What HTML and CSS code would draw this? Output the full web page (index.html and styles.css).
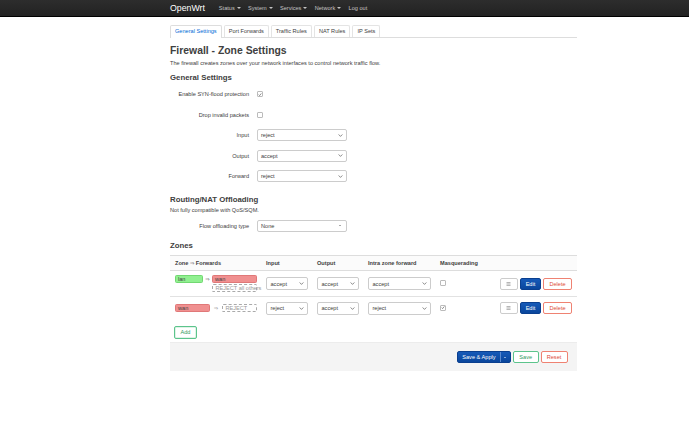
FILE: index.html
```html
<!DOCTYPE html>
<html>
<head>
<meta charset="utf-8">
<title>Firewall - Zone Settings</title>
<link rel="stylesheet" href="styles.css">
</head>
<body>
<header class="topbar">
  <div class="topbar-inner">
    <span class="brand">OpenWrt</span>
    <ul class="nav">
      <li>Status <span class="caret"></span></li>
      <li>System <span class="caret"></span></li>
      <li>Services <span class="caret"></span></li>
      <li>Network <span class="caret"></span></li>
      <li>Log out</li>
    </ul>
  </div>
</header>
<main class="container">
  <ul class="tabs">
    <li class="active">General Settings</li>
    <li>Port Forwards</li>
    <li>Traffic Rules</li>
    <li>NAT Rules</li>
    <li>IP Sets</li>
  </ul>

  <h2 class="title">Firewall - Zone Settings</h2>
  <p class="desc">The firewall creates zones over your network interfaces to control network traffic flow.</p>

  <h3 class="section">General Settings</h3>
  <div class="form">
    <div class="row"><label>Enable SYN-flood protection</label><span class="cb"><svg viewBox="0 0 6 6" width="5" height="5"><path d="M1 3.2 L2.4 4.6 L5 1.4" fill="none" stroke="#444" stroke-width="0.9"/></svg></span></div>
    <div class="row"><label>Drop invalid packets</label><span class="cb"></span></div>
    <div class="row"><label>Input</label><div class="select w90"><span>reject</span><svg class="chev" viewBox="0 0 6 4" width="5" height="3"><path d="M0.5 0.6 L3 3.2 L5.5 0.6" fill="none" stroke="#555" stroke-width="0.9"/></svg></div></div>
    <div class="row"><label>Output</label><div class="select w90"><span>accept</span><svg class="chev" viewBox="0 0 6 4" width="5" height="3"><path d="M0.5 0.6 L3 3.2 L5.5 0.6" fill="none" stroke="#555" stroke-width="0.9"/></svg></div></div>
    <div class="row"><label>Forward</label><div class="select w90"><span>reject</span><svg class="chev" viewBox="0 0 6 4" width="5" height="3"><path d="M0.5 0.6 L3 3.2 L5.5 0.6" fill="none" stroke="#555" stroke-width="0.9"/></svg></div></div>
  </div>

  <h3 class="section s2">Routing/NAT Offloading</h3>
  <p class="note">Not fully compatible with QoS/SQM.</p>
  <div class="form f2">
    <div class="row"><label>Flow offloading type</label><div class="select w90"><span>None</span><span class="tri"></span></div></div>
  </div>

  <h3 class="section s3">Zones</h3>
  <div class="zones">
    <div class="zrow zhead">
      <div>Zone <span class="arrow">⇒</span> Forwards</div>
      <div>Input</div>
      <div>Output</div>
      <div>Intra zone forward</div>
      <div>Masquerading</div>
      <div></div>
    </div>
    <div class="zrow r1">
      <div class="zone">
        <span class="badge lan">lan</span>
        <span class="arrow">⇒</span>
        <span class="stack"><span class="badge wan w45">wan</span><span class="badge reject w45">REJECT all others</span></span>
      </div>
      <div><div class="select w42"><span>accept</span><svg class="chev" viewBox="0 0 6 4" width="5" height="3"><path d="M0.5 0.6 L3 3.2 L5.5 0.6" fill="none" stroke="#555" stroke-width="0.9"/></svg></div></div>
      <div><div class="select w42"><span>accept</span><svg class="chev" viewBox="0 0 6 4" width="5" height="3"><path d="M0.5 0.6 L3 3.2 L5.5 0.6" fill="none" stroke="#555" stroke-width="0.9"/></svg></div></div>
      <div><div class="select w63"><span>accept</span><svg class="chev" viewBox="0 0 6 4" width="5" height="3"><path d="M0.5 0.6 L3 3.2 L5.5 0.6" fill="none" stroke="#555" stroke-width="0.9"/></svg></div></div>
      <div><span class="cb"></span></div>
      <div class="actions">
        <span class="btn btn-menu"><svg viewBox="0 0 6 5" width="5" height="4"><path d="M0.5 0.7 H5.5 M0.5 2.5 H5.5 M0.5 4.3 H5.5" stroke="#777" stroke-width="0.7"/></svg></span>
        <span class="btn btn-edit">Edit</span>
        <span class="btn btn-del">Delete</span>
      </div>
    </div>
    <div class="zrow r2">
      <div class="zone">
        <span class="badge wan w35">wan</span>
        <span class="arrow dim">⇒</span>
        <span class="badge reject w35">REJECT</span>
      </div>
      <div><div class="select w42"><span>reject</span><svg class="chev" viewBox="0 0 6 4" width="5" height="3"><path d="M0.5 0.6 L3 3.2 L5.5 0.6" fill="none" stroke="#555" stroke-width="0.9"/></svg></div></div>
      <div><div class="select w42"><span>accept</span><svg class="chev" viewBox="0 0 6 4" width="5" height="3"><path d="M0.5 0.6 L3 3.2 L5.5 0.6" fill="none" stroke="#555" stroke-width="0.9"/></svg></div></div>
      <div><div class="select w63"><span>reject</span><svg class="chev" viewBox="0 0 6 4" width="5" height="3"><path d="M0.5 0.6 L3 3.2 L5.5 0.6" fill="none" stroke="#555" stroke-width="0.9"/></svg></div></div>
      <div><span class="cb"><svg viewBox="0 0 6 6" width="5" height="5"><path d="M1 3.2 L2.4 4.6 L5 1.4" fill="none" stroke="#444" stroke-width="0.9"/></svg></span></div>
      <div class="actions">
        <span class="btn btn-menu"><svg viewBox="0 0 6 5" width="5" height="4"><path d="M0.5 0.7 H5.5 M0.5 2.5 H5.5 M0.5 4.3 H5.5" stroke="#777" stroke-width="0.7"/></svg></span>
        <span class="btn btn-edit">Edit</span>
        <span class="btn btn-del">Delete</span>
      </div>
    </div>
  </div>

  <div class="addwrap"><span class="btn btn-add">Add</span></div>

  <div class="footer">
    <span class="btn btn-apply"><span class="apply-main">Save &amp; Apply</span><span class="apply-caret"><span class="mini-tri"></span></span></span>
    <span class="btn btn-save">Save</span>
    <span class="btn btn-reset">Reset</span>
  </div>
</main>
</body>
</html>
```

FILE: styles.css
```css
* {
  box-sizing: border-box;
  margin: 0;
  padding: 0;
}

body {
  margin: 0;
  font-family: "Liberation Sans", Arial, sans-serif;
  font-size: 5.6px;
  color: #404040;
  background: #fff;
}

/* top bar */
.topbar {
  height: 17px;
  background: linear-gradient(#2d2d2d, #222);
  border-bottom: 1px solid #000;
}

.topbar-inner {
  margin-left: 170px;
  height: 16px;
  display: flex;
  align-items: center;
}

.brand {
  color: #fff;
  font-size: 8.75px;
  line-height: 16px;
}

.nav {
  display: flex;
  list-style: none;
  gap: 7.3px;
  margin-left: 14px;
  color: #c4c4c4;
}

.nav li {
  display: flex;
  align-items: center;
  gap: 2px;
}

.caret {
  width: 0;
  height: 0;
  border-left: 2px solid transparent;
  border-right: 2px solid transparent;
  border-top: 2px solid #c4c4c4;
}

/* main */
.container {
  margin-left: 170px;
  width: 407px;
  padding-top: 8px;
}

.tabs {
  display: flex;
  list-style: none;
  gap: 2px;
  height: 13px;
  border-bottom: 1px solid #ddd;
}

.tabs li {
  height: 12px;
  line-height: 11px;
  padding: 0 4px;
  border: 1px solid #e4e4e4;
  border-bottom: 0;
  border-radius: 2px 2px 0 0;
  color: #404040;
}

.tabs li.active {
  height: 13px;
  color: #0069d6;
  border-color: #ddd;
  background: #fff;
}

.title {
  margin-top: 7px;
  font-size: 10.4px;
  line-height: 12px;
  font-weight: bold;
  color: #404040;
}

.desc {
  margin-top: 2.5px;
  line-height: 7px;
}

.section {
  margin-top: 6.5px;
  font-size: 7.8px;
  line-height: 10px;
  font-weight: bold;
  color: #404040;
}

.section.s2 {
  margin-top: 12.5px;
}

.section.s3 {
  margin-top: 9.5px;
}

.note {
  margin-top: 2px;
  line-height: 7px;
}

.form {
  display: flex;
  flex-direction: column;
  gap: 8.5px;
  margin-top: 5px;
}

.form.f2 {
  margin-top: 6px;
}

.row {
  display: flex;
  align-items: center;
  height: 12px;
  gap: 7.5px;
}

.row label {
  width: 79px;
  text-align: right;
}

.row .cb {
  margin-left: 0.5px;
}

/* controls */
.select {
  height: 12px;
  border: 1px solid #ccc;
  border-radius: 2px;
  background: #fff;
  display: flex;
  align-items: center;
  justify-content: space-between;
  padding: 0 3px 0 3.5px;
  color: #404040;
}

.select.w90 { width: 90px; }
.select.w42 { width: 42px; height: 13px; }
.select.w63 { width: 63px; height: 13px; }

.chev {
  display: block;
}

.tri {
  width: 0;
  height: 0;
  border-left: 1.3px solid transparent;
  border-right: 1.3px solid transparent;
  border-top: 1.6px solid #555;
  margin-right: 2px;
}

.cb {
  width: 6px;
  height: 6px;
  border: 1px solid #bbb;
  border-radius: 1px;
  background: #fff;
  display: inline-flex;
  align-items: center;
  justify-content: center;
}

.cb svg {
  display: block;
}

/* zones table */
.zones {
  margin-top: 4px;
}

.zrow {
  display: grid;
  grid-template-columns: 91px 51px 51px 72px 1fr auto;
  align-items: center;
  padding: 0 5px;
}

.zhead {
  height: 16px;
  border-top: 1px solid #ddd;
  border-bottom: 1px solid #ddd;
  background: #fbfbfb;
  font-weight: bold;
  color: #404040;
}

.zhead .arrow {
  font-weight: normal;
}

.r1 {
  height: 26px;
  border-bottom: 1px solid #e2e2e2;
}

.r2 {
  height: 22px;
}

.zone {
  width: 82px;
  display: flex;
  align-items: flex-start;
  justify-content: space-between;
}

.r2 .zone {
  align-items: center;
}

.stack {
  display: flex;
  flex-direction: column;
  gap: 0.5px;
}

.arrow {
  font-family: "DejaVu Sans", sans-serif;
  font-size: 5.2px;
  line-height: 8px;
  color: #555;
}

.arrow.dim {
  color: #888;
}

.badge {
  display: block;
  height: 8px;
  line-height: 6.5px;
  padding: 0 2px;
  border: 1px solid;
  border-radius: 1.5px;
  white-space: nowrap;
  color: #404040;
}

.lan {
  width: 28px;
  background: #90f090;
  border-color: #72d872;
}

.wan {
  background: #f09090;
  border-color: #e07878;
}

.reject {
  border: 1px dashed #aaa;
  color: #9a9a9a;
  background: #fff;
  padding-left: 2.5px;
}

.w45 { width: 45px; }
.w35 { width: 35px; }

.actions {
  display: flex;
  gap: 1.8px;
}

.btn {
  height: 12px;
  border: 1px solid;
  border-radius: 2px;
  display: inline-flex;
  align-items: center;
  justify-content: center;
  white-space: nowrap;
  background: #fff;
}

.btn-menu {
  width: 18px;
  border-color: #ccc;
}

.btn-edit {
  width: 21.5px;
  background: linear-gradient(#165ab8, #0a469c);
  border-color: #0a3f8f;
  color: #fff;
}

.btn-del {
  width: 29px;
  border-color: #ef8272;
  color: #dd4b39;
}

.addwrap {
  margin-top: 6.5px;
  padding-left: 4px;
}

.btn-add {
  width: 23px;
  height: 13px;
  border-color: #5cc48c;
  box-shadow: inset 0 0 0 0.5px #bfe8cf;
  color: #2f9a5e;
}

/* footer */
.footer {
  margin-top: 3.5px;
  height: 29px;
  background: #f4f4f4;
  border-top: 1px solid #ececec;
  display: flex;
  justify-content: flex-end;
  align-items: center;
  gap: 1.8px;
  padding-right: 9.5px;
}

.footer .btn {
  height: 11.5px;
}

.btn-apply {
  width: 54px;
  padding: 0;
  border-color: #0a3f8f;
  background: linear-gradient(#165ab8, #0a469c);
  color: #fff;
  justify-content: flex-start;
  overflow: hidden;
}

.apply-main {
  width: 42px;
  text-align: center;
}

.apply-caret {
  flex: 1;
  height: 100%;
  border-left: 1px solid #5a8ad0;
  display: flex;
  align-items: center;
  justify-content: center;
}

.mini-tri {
  width: 0;
  height: 0;
  border-left: 1.3px solid transparent;
  border-right: 1.3px solid transparent;
  border-top: 1.6px solid #fff;
}

.btn-save {
  width: 26px;
  border-color: #5cc48c;
  color: #2f9a5e;
}

.btn-reset {
  width: 27px;
  border-color: #ef8272;
  color: #dd4b39;
}
```
